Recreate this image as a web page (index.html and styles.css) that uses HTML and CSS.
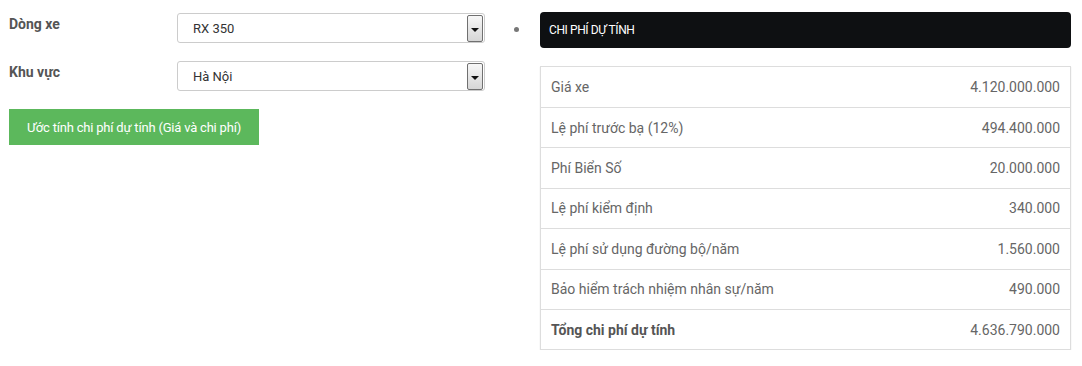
FILE: index.html
```html
<!DOCTYPE html>
<html lang="vi">
<head>
    <meta charset="UTF-8">
    <meta name="viewport" content="width=device-width, initial-scale=1.0">
    <title>Chi phí dự tính</title>
    <link rel="stylesheet" href="styles.css">
</head>
<body>
    <div class="page">
        <div class="form">
            <div class="form-row">
                <label class="form-label">Dòng xe</label>
                <div class="select">
                    <span class="select-value">RX 350</span>
                    <span class="select-arrow"></span>
                </div>
            </div>
            <div class="form-row">
                <label class="form-label">Khu vực</label>
                <div class="select">
                    <span class="select-value">Hà Nội</span>
                    <span class="select-arrow"></span>
                </div>
            </div>
            <button class="btn-estimate" type="button">Ước tính chi phí dự tính (Giá và chi phí)</button>
        </div>

        <div class="bullet-col">
            <span class="bullet"></span>
        </div>

        <div class="cost-panel">
            <div class="cost-title">CHI PHÍ DỰ TÍNH</div>
            <div class="cost-table">
                <div class="cost-row">
                    <span>Giá xe</span>
                    <span>4.120.000.000</span>
                </div>
                <div class="cost-row">
                    <span>Lệ phí trước bạ (12%)</span>
                    <span>494.400.000</span>
                </div>
                <div class="cost-row">
                    <span>Phí Biển Số</span>
                    <span>20.000.000</span>
                </div>
                <div class="cost-row">
                    <span>Lệ phí kiểm định</span>
                    <span>340.000</span>
                </div>
                <div class="cost-row">
                    <span>Lệ phí sử dụng đường bộ/năm</span>
                    <span>1.560.000</span>
                </div>
                <div class="cost-row">
                    <span>Bảo hiểm trách nhiệm nhân sự/năm</span>
                    <span>490.000</span>
                </div>
                <div class="cost-row total">
                    <span>Tổng chi phí dự tính</span>
                    <span>4.636.790.000</span>
                </div>
            </div>
        </div>
    </div>
</body>
</html>
```

FILE: styles.css
```css
html, body {
    margin: 0;
    padding: 0;
    background-color: #ffffff;
}
body {
    font-family: Roboto, "Liberation Sans", sans-serif;
    color: #333333;
}
.page {
    display: flex;
    align-items: flex-start;
    padding: 12px 11px 0 9px;
}

/* left form */
.form {
    width: 476px;
    display: flex;
    flex-direction: column;
}
.form-row {
    display: flex;
    align-items: flex-start;
    height: 30px;
    margin-top: 1px;
    margin-bottom: 17px;
}
.form-label {
    width: 168px;
    padding-top: 3px;
    font-size: 14px;
    font-weight: bold;
    color: #555555;
}
.select {
    width: 308px;
    height: 30px;
    box-sizing: border-box;
    display: flex;
    align-items: center;
    justify-content: space-between;
    border: 1px solid #cccccc;
    border-radius: 3px;
    padding-left: 15px;
    padding-right: 1px;
    font-size: 13px;
    color: #333333;
}
.select-arrow {
    position: relative;
    width: 16px;
    height: 27px;
    box-sizing: border-box;
    border: 1px solid #707070;
    border-radius: 2px;
    background: linear-gradient(#f7f7f7, #d6d6d6);
}
.select-arrow::after {
    content: "";
    position: absolute;
    left: 3px;
    top: 12px;
    border-left: 4px solid transparent;
    border-right: 4px solid transparent;
    border-top: 4px solid #111111;
}
.btn-estimate {
    align-self: flex-start;
    width: 250px;
    height: 36px;
    margin-top: 1px;
    border: none;
    background-color: #5cb85c;
    color: #ffffff;
    font-family: Roboto, "Liberation Sans", sans-serif;
    font-size: 13px;
    letter-spacing: -0.2px;
    cursor: pointer;
}

/* bullet */
.bullet-col {
    width: 55px;
    padding-top: 15px;
    padding-left: 29px;
    box-sizing: border-box;
}
.bullet {
    display: block;
    width: 5px;
    height: 5px;
    border-radius: 50%;
    background-color: #777777;
}

/* cost panel */
.cost-panel {
    flex: 1;
}
.cost-title {
    height: 36px;
    box-sizing: border-box;
    padding: 10px 9px;
    background-color: #0e1012;
    border-radius: 4px;
    color: #ffffff;
    font-size: 12px;
    letter-spacing: -0.4px;
    line-height: 16px;
}
.cost-table {
    margin-top: 18px;
    border: 1px solid #dddddd;
    box-shadow: 0 1px 1px #d8d8d8;
}
.cost-row {
    display: flex;
    justify-content: space-between;
    align-items: center;
    height: 40.4px;
    box-sizing: border-box;
    padding: 0 10px;
    border-top: 1px solid #dddddd;
    font-size: 14px;
    color: #666666;
}
.cost-row:first-child {
    border-top: none;
    height: 40px;
}
.cost-row.total span:first-child {
    font-weight: bold;
    color: #555555;
}
```
